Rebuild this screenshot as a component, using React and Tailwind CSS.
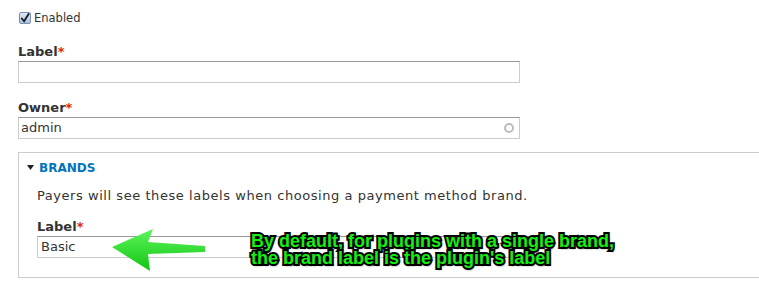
export default function App() {
  const font = { fontFamily: '"DejaVu Sans", Verdana, sans-serif' };
  return (
    <div className="relative w-[759px] h-[287px] bg-white overflow-hidden pl-[18px] pt-[11px] text-[#333]" style={font}>
      <label className="flex items-center gap-[3px] h-[14px] text-[11.5px] leading-[14px]">
        <span className="w-[12px] h-[12px] ml-[1px] rounded-[2px] border border-[#7a8fb0] bg-gradient-to-b from-[#dfe9f7] to-[#a9c1e6] flex items-center justify-center">
          <svg width="11" height="11" viewBox="0 0 11 11">
            <path d="M2 5.5 L4.5 8.5 L9.5 0.5" fill="none" stroke="#1a1a1a" strokeWidth="2" strokeLinecap="round" />
          </svg>
        </span>
        Enabled
      </label>

      <div className="mt-[19px]">
        <div className="text-[13px] font-bold leading-[16px]">
          Label<span className="text-[#e32700]">*</span>
        </div>
        <div className="mt-[1px] w-[502px] h-[22px] border border-[#ccc] border-t-[#999]" />
      </div>

      <div className="mt-[17px]">
        <div className="text-[13px] font-bold leading-[16px]">
          Owner<span className="text-[#e32700]">*</span>
        </div>
        <div className="mt-[1px] w-[502px] h-[22px] border border-[#ccc] border-t-[#999] flex items-center justify-between px-[2px] text-[13px] leading-[16px]">
          <span>admin</span>
          <span className="w-[10px] h-[10px] rounded-full border-2 border-[#bbb] mr-[3px]" />
        </div>
      </div>

      <div className="mt-[13px] border border-r-0 border-[#ccc] h-[126px] pl-[8px] pt-[8px]">
        <div className="flex items-center gap-[5px] h-[14px] text-[12px] leading-[14px] font-bold text-[#0074bd]">
          <svg width="7" height="5" viewBox="0 0 7 5" className="mt-[-1px]">
            <path d="M0 0 H7 L3.5 5 Z" fill="#222" />
          </svg>
          BRANDS
        </div>
        <p className="mt-[12px] pl-[10px] text-[13px] leading-[18px] tracking-[0.55px]">
          Payers will see these labels when choosing a payment method brand.
        </p>
        <div className="mt-[14px] pl-[10px]">
          <div className="text-[13px] font-bold leading-[16px]">
            Label<span className="text-[#e32700]">*</span>
          </div>
          <div className="mt-[1px] w-[502px] h-[22px] border border-[#ccc] border-t-[#999] flex items-center px-[3px] text-[13px] leading-[16px]">
            Basic
          </div>
        </div>
      </div>

      {/* annotation overlay */}
      <svg className="absolute left-[110px] top-[225px]" width="100" height="50" viewBox="0 0 100 50">
        <defs>
          <linearGradient id="g" x1="0" y1="0" x2="0" y2="1">
            <stop offset="0" stopColor="#5cf55c" />
            <stop offset="1" stopColor="#12c412" />
          </linearGradient>
        </defs>
        <path d="M2 22 L43 4 L38 17 L95 21 L95 27 L38 29 L40 46 Z" fill="url(#g)" />
      </svg>

      <div
        className="absolute left-[251px] top-[233px] text-[18px] leading-[17px] font-bold text-[#14ee14] [-webkit-text-stroke:4px_#000] [paint-order:stroke_fill] [text-shadow:1px_2px_2px_rgba(0,0,0,0.6)]"
        style={{ fontFamily: '"Liberation Sans", Arial, sans-serif' }}
      >
        <div>By default, for plugins with a single brand,</div>
        <div>the brand label is the plugin's label</div>
      </div>
    </div>
  );
}
